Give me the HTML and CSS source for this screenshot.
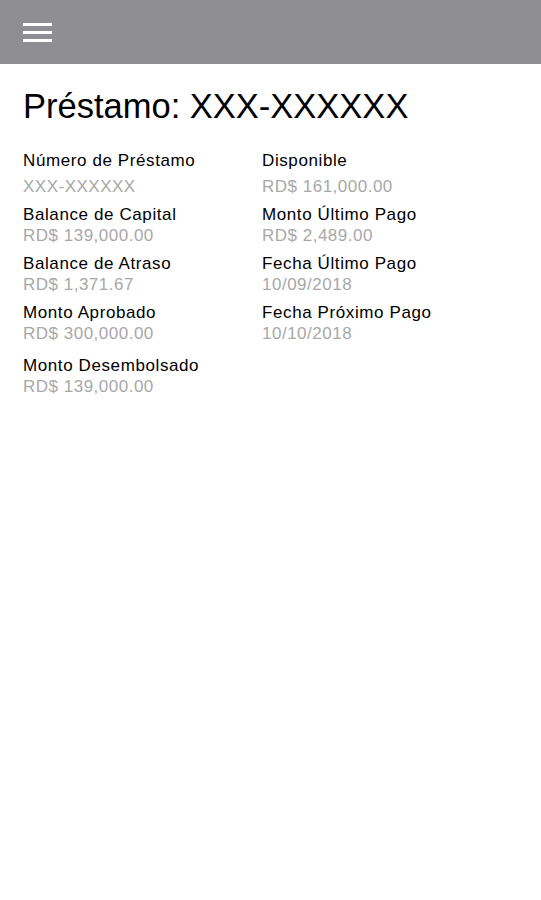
FILE: index.html
```html
<!DOCTYPE html>
<html lang="es">
<head>
  <meta charset="UTF-8">
  <title>Préstamo</title>
  <link rel="stylesheet" href="styles.css">
</head>
<body>

  <div class="topbar">
    <button class="menu-btn" aria-label="Menú">
      <svg width="29" height="20" viewBox="0 0 29 20">
        <rect x="0" y="0" width="29" height="3" fill="#fff"/>
        <rect x="0" y="8" width="29" height="3" fill="#fff"/>
        <rect x="0" y="16" width="29" height="3" fill="#fff"/>
      </svg>
    </button>
  </div>

  <div class="content">
    <h1 class="title">Préstamo: XXX-XXXXXX</h1>

    <div class="details">
      <div class="item first">
        <div class="label">Número de Préstamo</div>
        <div class="value">XXX-XXXXXX</div>
      </div>
      <div class="item first">
        <div class="label">Disponible</div>
        <div class="value">RD$ 161,000.00</div>
      </div>

      <div class="item">
        <div class="label">Balance de Capital</div>
        <div class="value">RD$ 139,000.00</div>
      </div>
      <div class="item">
        <div class="label">Monto Último Pago</div>
        <div class="value">RD$ 2,489.00</div>
      </div>

      <div class="item">
        <div class="label">Balance de Atraso</div>
        <div class="value">RD$ 1,371.67</div>
      </div>
      <div class="item">
        <div class="label">Fecha Último Pago</div>
        <div class="value">10/09/2018</div>
      </div>

      <div class="item">
        <div class="label">Monto Aprobado</div>
        <div class="value">RD$ 300,000.00</div>
      </div>
      <div class="item">
        <div class="label">Fecha Próximo Pago</div>
        <div class="value">10/10/2018</div>
      </div>

      <div class="item last">
        <div class="label">Monto Desembolsado</div>
        <div class="value">RD$ 139,000.00</div>
      </div>
    </div>
  </div>

</body>
</html>
```

FILE: styles.css
```css
body {
  margin: 0;
  font-family: 'Liberation Sans', Arial, sans-serif;
  background-color: #ffffff;
  color: #000000;
}

.topbar {
  height: 64px;
  background-color: #8e8e93;
  display: flex;
  align-items: center;
  padding-left: 23px;
}

.menu-btn {
  background: none;
  border: none;
  padding: 0;
  margin-top: 2px;
  display: flex;
}

.content {
  padding: 0 23px;
}

.title {
  font-size: 34.5px;
  font-weight: normal;
  margin: 22px 0 24px;
  line-height: 40px;
}

.details {
  display: grid;
  grid-template-columns: 239px 1fr;
  row-gap: 7px;
}

.label {
  font-size: 17px;
  line-height: 21px;
  letter-spacing: 0.6px;
}

.value {
  font-size: 17px;
  line-height: 21px;
  letter-spacing: 0.5px;
  color: #a8a8a8;
}

.item.first .value {
  margin-top: 5px;
}

.item.last {
  margin-top: 4px;
}
```
